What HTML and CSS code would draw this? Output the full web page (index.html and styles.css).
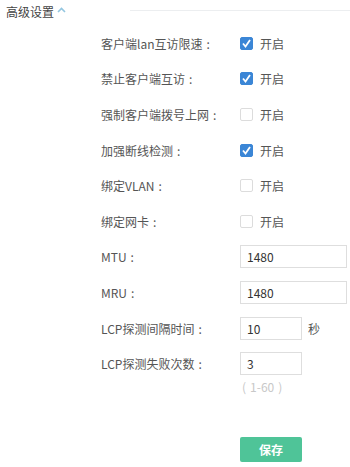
FILE: index.html
```html
<!DOCTYPE html>
<html lang="zh-CN">
<head>
<meta charset="utf-8">
<link rel="stylesheet" href="styles.css">
</head>
<body>
<div class="page">
  <div class="header">
    <span class="title">高级设置</span>
    <svg class="caret" width="9" height="6" viewBox="0 0 9 6"><polyline points="1,5 4.5,1.5 8,5" fill="none" stroke="#93c6e0" stroke-width="1.6"/></svg>
    <span class="rule"></span>
  </div>
  <div class="form">
    <div class="row"><span class="label">客户端lan互访限速<span class="colon">:</span></span><span class="cb on"><svg width="13" height="13" viewBox="0 0 13 13"><polyline points="3,6.5 5.5,9.5 10,3" fill="none" stroke="#fff" stroke-width="1.8"/></svg></span><span class="opt">开启</span></div>
    <div class="row"><span class="label">禁止客户端互访<span class="colon">:</span></span><span class="cb on"><svg width="13" height="13" viewBox="0 0 13 13"><polyline points="3,6.5 5.5,9.5 10,3" fill="none" stroke="#fff" stroke-width="1.8"/></svg></span><span class="opt">开启</span></div>
    <div class="row"><span class="label">强制客户端拨号上网<span class="colon">:</span></span><span class="cb"></span><span class="opt">开启</span></div>
    <div class="row"><span class="label">加强断线检测<span class="colon">:</span></span><span class="cb on"><svg width="13" height="13" viewBox="0 0 13 13"><polyline points="3,6.5 5.5,9.5 10,3" fill="none" stroke="#fff" stroke-width="1.8"/></svg></span><span class="opt">开启</span></div>
    <div class="row"><span class="label">绑定VLAN<span class="colon">:</span></span><span class="cb"></span><span class="opt">开启</span></div>
    <div class="row"><span class="label">绑定网卡<span class="colon">:</span></span><span class="cb"></span><span class="opt">开启</span></div>
    <div class="row"><span class="label">MTU<span class="colon">:</span></span><span class="input wide">1480</span></div>
    <div class="row"><span class="label">MRU<span class="colon">:</span></span><span class="input wide">1480</span></div>
    <div class="row"><span class="label">LCP探测间隔时间<span class="colon">:</span></span><span class="input">10</span><span class="unit">秒</span></div>
    <div class="row"><span class="label">LCP探测失败次数<span class="colon">:</span></span><span class="input">3</span></div>
    <div class="hint"><span class="paren">(</span>1-60<span class="paren">)</span></div>
    <div class="actions"><span class="btn">保存</span></div>
  </div>
</div>
</body>
</html>
```
FILE: styles.css
```css
html, body {
  margin: 0;
  padding: 0;
  background: #fff;
}
body {
  font-family: "Noto Sans CJK SC", "Noto Sans", sans-serif;
  font-size: 12px;
  color: #555;
  width: 350px;
  height: 467px;
  overflow: hidden;
}
.header {
  display: flex;
  align-items: center;
  height: 22px;
  padding-left: 6px;
  padding-top: 1px;
}
.title {
  color: #444;
  line-height: 22px;
}
.caret {
  margin-left: 3px;
  margin-top: -4px;
}
.rule {
  flex: 1;
  height: 1px;
  background: #eceef0;
  margin-left: 64px;
  margin-top: -3px;
}
.form {
  padding-left: 101px;
  margin-top: 2.5px;
}
.row {
  display: flex;
  align-items: center;
  height: 35.6px;
}
.label {
  width: 139px;
  flex: none;
  color: #555;
  white-space: nowrap;
}
.colon {
  margin-left: 4px;
}
.cb {
  width: 13px;
  height: 13px;
  box-sizing: border-box;
  border: 1px solid #dcdcdc;
  border-radius: 2px;
  background: #fff;
  display: flex;
  flex: none;
}
.cb.on {
  background: #3b86d6;
  border-color: #3b86d6;
}
.cb.on svg {
  margin: -1px;
}
.opt {
  margin-left: 7px;
  color: #555;
}
.input {
  box-sizing: border-box;
  width: 62px;
  height: 23px;
  border: 1px solid #dedede;
  padding-left: 6px;
  line-height: 21px;
  color: #333;
  font-size: 12px;
}
.input.wide {
  width: 107px;
}
.unit {
  margin-left: 6px;
  color: #555;
}
.hint {
  margin-left: 139px;
  margin-top: -2px;
  padding-left: 2px;
  line-height: 16px;
  color: #c8c8c8;
}
.paren {
  margin: 0 4px;
}
.paren:first-child {
  margin-left: 0;
}
.actions {
  padding-left: 139px;
  margin-top: 42px;
}
.btn {
  display: flex;
  align-items: center;
  justify-content: center;
  width: 62px;
  height: 25px;
  background: #4fc498;
  border-radius: 2px;
  color: #fff;
  font-weight: bold;
  font-size: 12px;
}
```
